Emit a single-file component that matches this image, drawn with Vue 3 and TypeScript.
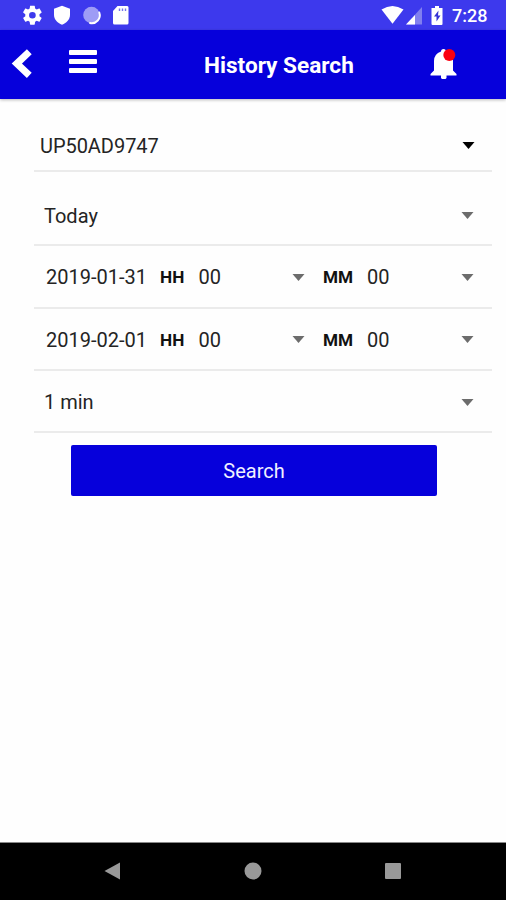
<script setup lang="ts">
interface DateRow {
  date: string
  hour: string
  minute: string
}

const vehicle = 'UP50AD9747'
const period = 'Today'
const interval = '1 min'
const dates: DateRow[] = [
  { date: '2019-01-31', hour: '00', minute: '00' },
  { date: '2019-02-01', hour: '00', minute: '00' },
]
</script>

<template>
  <div class="screen">
    <div class="status">
      <svg class="status-left" width="116" height="30" viewBox="0 0 116 30">
        <g fill="#fff">
          <path transform="translate(11 3.800) scale(.95)" fill-rule="evenodd" d="M19.43 12.98c.04-.32.07-.64.07-.98s-.03-.66-.07-.98l2.11-1.65c.19-.15.24-.42.12-.64l-2-3.46c-.12-.22-.39-.3-.61-.22l-2.49 1c-.52-.4-1.08-.73-1.69-.98l-.38-2.65A.49.49 0 0 0 14 2h-4c-.25 0-.46.18-.49.42l-.38 2.65c-.61.25-1.17.59-1.69.98l-2.49-1c-.23-.09-.49 0-.61.22l-2 3.46c-.13.22-.07.49.12.64l2.11 1.65c-.04.32-.07.65-.07.98s.03.66.07.98l-2.11 1.65c-.19.15-.24.42-.12.64l2 3.46c.12.22.39.3.61.22l2.49-1c.52.4 1.08.73 1.69.98l.38 2.65c.03.24.24.42.49.42h4c.25 0 .46-.18.49-.42l.38-2.65c.61-.25 1.17-.59 1.69-.98l2.49 1c.23.09.49 0 .61-.22l2-3.46c.12-.22.07-.49-.12-.64l-2.11-1.65zM12 15.500a3.500 3.500 0 1 1 0-7 3.500 3.500 0 0 1 0 7z" />
          <path d="M52 5.700l8 3v6c0 4.500-3.300 8.200-8 10-4.700-1.800-8-5.500-8-10v-6z" />
          <circle cx="81.500" cy="15" r="8.300" opacity=".5" />
        </g>
        <path d="M89.300 12.500A8 8 0 0 1 80 23" fill="none" stroke="#fff" stroke-width="1.900" stroke-linecap="round" />
        <path d="M107.500 6h9.700q1.300 0 1.300 1.500v15.500q0 1.500-1.500 1.500h-12.500q-1.500 0-1.500-1.500v-12z" fill="#fff" />
        <path d="M109.500 8.500v2.500M112.500 8.500v2.500M115.500 8.500v2.500" stroke="#7775ea" stroke-width="1.400" />
      </svg>
      <div class="status-right">
        <svg width="66" height="30" viewBox="0 0 66 30">
          <path d="M.5 9.500Q11.500 2.500 22.500 9.500L11.500 23.700z" fill="#fff" />
          <path d="M41 7v17.500H25z" fill="#817fef" />
          <path d="M34 15v9.500h-9z" fill="#fff" />
          <path d="M54 6h4v2h3.500v16q0 1-1 1h-9q-1 0-1-1V8H54z" fill="#fff" />
          <path d="M57.500 10.500l-4.500 6h2.500v5l4-6H57z" fill="#3532d5" />
        </svg>
        <span class="clock">7:28</span>
      </div>
    </div>

    <header class="bar">
      <svg class="back" width="22" height="32" viewBox="0 0 22 32">
        <path d="M18.300 3.800L5.800 15.600l12.500 11.800" fill="none" stroke="#fff" stroke-width="7" />
      </svg>
      <svg class="menu" width="28" height="24" viewBox="0 0 28 24">
        <g fill="#fff">
          <rect y="0" width="28" height="5" rx="1" />
          <rect y="9" width="28" height="5" rx="1" />
          <rect y="18" width="28" height="5" rx="1" />
        </g>
      </svg>
      <h1>History Search</h1>
      <svg class="bell" width="28" height="34" viewBox="0 0 28 34">
        <path d="M11 4.500Q11 2 13.500 2t2.500 2.500Q23 7 23 14v9.500l3.500 3.500v1.500H.5V27L4 23.500V14q0-7 7-9.500zM11 28.500h5.500v2.500l-1 1h-3.500l-1-1z" fill="#fff" />
        <circle cx="19.300" cy="8" r="6" fill="#fb0010" />
      </svg>
    </header>

    <main>
      <div class="row vehicle">
        <span class="value">{{ vehicle }}</span>
        <svg class="caret" width="13" height="7" viewBox="0 0 13 7"><path d="M.5 0h12l-6 7z" /></svg>
      </div>
      <div class="row period">
        <span class="value">{{ period }}</span>
        <svg class="caret" width="13" height="7" viewBox="0 0 13 7"><path d="M.5 0h12l-6 7z" /></svg>
      </div>
      <div v-for="d in dates" :key="d.date" class="row dated">
        <span class="date">{{ d.date }}</span>
        <b class="hh">HH</b>
        <div class="select hour">
          <span>{{ d.hour }}</span>
          <svg class="caret" width="13" height="7" viewBox="0 0 13 7"><path d="M.5 0h12l-6 7z" /></svg>
        </div>
        <b class="mm">MM</b>
        <div class="select minute">
          <span>{{ d.minute }}</span>
          <svg class="caret" width="13" height="7" viewBox="0 0 13 7"><path d="M.5 0h12l-6 7z" /></svg>
        </div>
      </div>
      <div class="row interval">
        <span class="value">{{ interval }}</span>
        <svg class="caret" width="13" height="7" viewBox="0 0 13 7"><path d="M.5 0h12l-6 7z" /></svg>
      </div>
      <button class="search" type="button">Search</button>
    </main>

    <nav>
      <svg width="18" height="20" viewBox="0 0 18 20"><path d="M.5 10L16 1.500v17z" fill="#999" /></svg>
      <svg width="18" height="18" viewBox="0 0 18 18"><circle cx="9" cy="9" r="8.500" fill="#999" /></svg>
      <svg width="18" height="18" viewBox="0 0 18 18"><rect x="1" y="1" width="16" height="16" rx="1" fill="#999" /></svg>
    </nav>
  </div>
</template>

<style>
body {
  margin: 0;
  background: #fefefe;
}
</style>

<style scoped>
.screen {
  box-sizing: border-box;
  width: 506px;
  height: 900px;
  display: flex;
  flex-direction: column;
  background: #fefefe;
  color: #242424;
  font: 20px/24px Roboto, sans-serif;
  overflow: hidden;
}
svg {
  display: block;
  flex: none;
}
.status {
  height: 30px;
  flex: none;
  display: flex;
  justify-content: space-between;
  background: #3d39ed;
}
.status-left {
  margin-left: 10px;
  overflow: visible;
}
.status-right {
  display: flex;
  width: 125px;
}
.clock {
  margin-left: 5px;
  color: #fff;
  font-size: 18px;
  font-weight: 500;
  line-height: 32px;
}
.bar {
  position: relative;
  z-index: 1;
  box-sizing: border-box;
  height: 69px;
  flex: none;
  display: flex;
  background: #0600db;
  box-shadow: 0 1px 3px rgba(0, 0, 0, .28);
}
.back {
  margin: 18px 0 0 11px;
}
.menu {
  margin: 20px 0 0 36px;
}
h1 {
  width: 151px;
  margin: 23px 0 0 107px;
  color: #fff;
  font-size: 22.600px;
  line-height: 26px;
  font-weight: 700;
  white-space: nowrap;
}
.bell {
  margin: 17px 0 0 75px;
}
main {
  flex: 1;
  display: flex;
  flex-direction: column;
  padding: 0 14px 0 34px;
}
.row {
  box-sizing: border-box;
  height: 62px;
  display: flex;
  align-items: center;
  border-bottom: 2px solid #ebebeb;
}
.value {
  flex: 1;
}
.caret {
  fill: #6c6c6c;
  margin-right: 18px;
}
.vehicle {
  height: 73px;
  padding: 21px 0 0 6px;
}
.vehicle .value {
  letter-spacing: -.05px;
  padding-top: 1px;
}
.vehicle .caret {
  fill: #000;
  margin-right: 17px;
}
.period {
  height: 74px;
  padding: 14px 0 0 10px;
}
.period .value {
  padding-top: 1px;
}
.interval {
  padding: 2px 0 0 10px;
}
.dated {
  height: 62.500px;
  padding: 2px 0 0 12px;
}
.date {
  width: 114px;
}
b {
  color: #111;
  font-size: 17.200px;
}
.hh {
  width: 38.500px;
}
.mm {
  width: 44px;
}
.select {
  display: flex;
  align-items: center;
  justify-content: space-between;
}
.hour {
  width: 124.500px;
}
.minute {
  flex: 1;
}
.search {
  width: 366px;
  height: 51px;
  margin: 12px 0 0 36.500px;
  padding: 1px 0 0 1px;
  border: 0;
  border-radius: 2px;
  background: #0600db;
  color: #f0f0ff;
  font: 20px/24px Roboto, sans-serif;
}
nav {
  box-sizing: border-box;
  height: 58px;
  flex: none;
  display: flex;
  align-items: center;
  justify-content: space-between;
  padding: 0 104px 2px 104px;
  border-top: 1px solid #888;
  background: #000;
}
</style>
